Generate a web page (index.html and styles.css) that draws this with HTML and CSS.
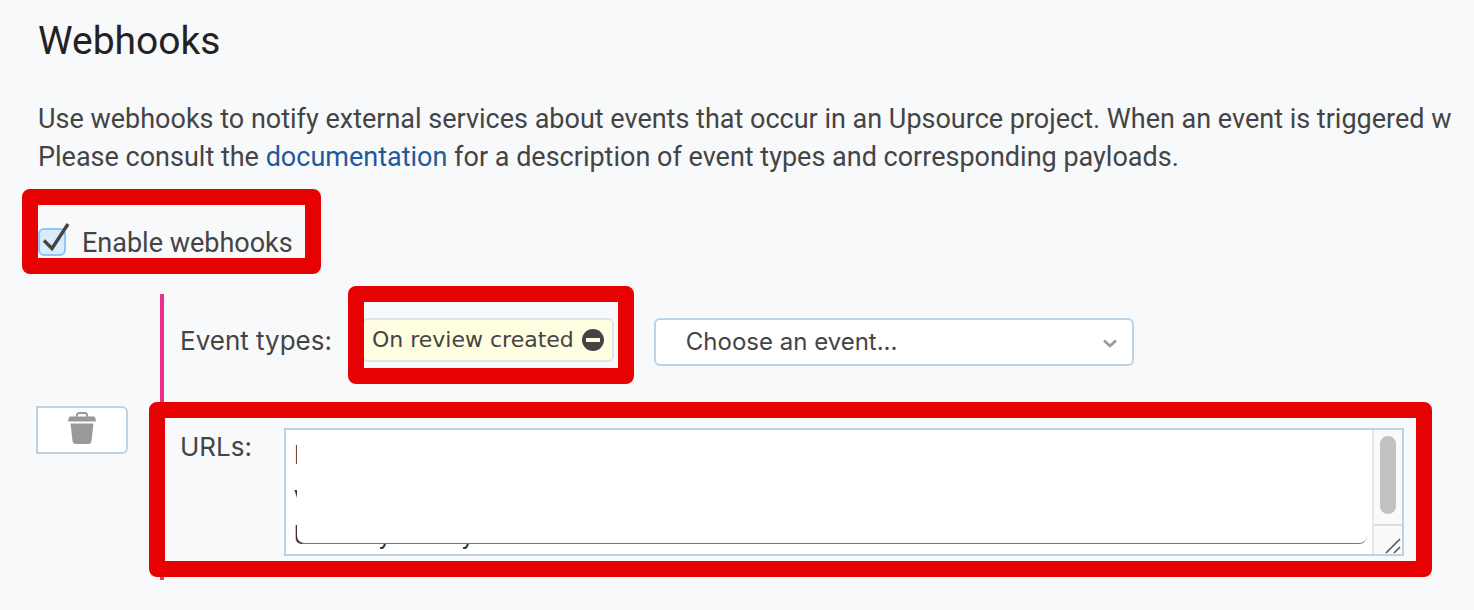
FILE: index.html
```html
<!DOCTYPE html>
<html lang="en">
<head>
<meta charset="utf-8">
<title>Webhooks</title>
<link rel="stylesheet" href="styles.css">
</head>
<body>
<main class="page">
  <h1 class="title">Webhooks</h1>
  <p class="intro">Use webhooks to notify external services about events that occur in an Upsource project. When an event is triggered w<br>Please consult the <a class="link" href="#documentation">documentation</a> for a description of event types and corresponding payloads.</p>

  <div class="enable marked">
    <label class="enable-label" for="enable">
      <span class="check">
        <input class="check-input" type="checkbox" id="enable" checked>
        <svg class="check-mark" viewBox="0 0 32 32" width="32" height="32" aria-hidden="true"><path d="M6 18.500L14 26.500L30 2" fill="none" stroke="#444" stroke-width="3.400"/></svg>
      </span>
      Enable webhooks
    </label>
    <span class="mark mark-enable"></span>
  </div>

  <div class="hook">
    <button class="trash" type="button" aria-label="Delete webhook">
      <svg viewBox="0 0 28 32" width="28" height="32" aria-hidden="true"><path d="M2 4.500H7.500L8.500 1.500Q9 0 10.500 0H17.500Q19 0 19.500 1.500L20.500 4.500H26Q27.500 5 28 9.500H0Q.5 5 2 4.500ZM9.500 4.500H18.500L17.500 2H10.500ZM2.500 11.500H25.500L23.500 29Q23 32 20.500 32H7.500Q5 32 4.500 29Z" fill="#999" fill-rule="evenodd"/></svg>
    </button>
    <div class="settings">
      <div class="row events">
        <label class="row-label" for="event">Event types:</label>
        <div class="chip marked">
          <span>On review created</span>
          <button class="chip-remove" type="button" aria-label="Remove event">
            <svg viewBox="0 0 22 22" width="22" height="22" aria-hidden="true"><circle cx="11" cy="11" r="11" fill="#444"/><rect x="4" y="9" width="14" height="4" fill="#fffee0"/></svg>
          </button>
          <span class="mark mark-chip"></span>
        </div>
        <div class="picker">
          <select class="select" id="event"><option>Choose an event...</option></select>
          <svg class="arrow" viewBox="0 0 14 9" width="14" height="9" aria-hidden="true"><path d="M1 1.500L7 7L13 1.500" fill="none" stroke="#999" stroke-width="2.600"/></svg>
        </div>
      </div>
      <div class="row urls">
        <label class="row-label" for="urls">URLs:</label>
        <div class="url-box">
          <textarea class="url-input" id="urls" rows="3">N
v
UoZMNyoZo14yZ</textarea>
          <span class="cover"></span>
          <span class="scroll"><span class="thumb"></span>
            <svg class="grip" viewBox="0 0 28 28" width="28" height="28" aria-hidden="true"><path d="M12 27L26 13M20 27L26 21" fill="none" stroke="#555" stroke-width="1.600"/></svg>
          </span>
        </div>
      </div>
      <span class="mark mark-urls"></span>
    </div>
  </div>
</main>
</body>
</html>
```
FILE: styles.css
```css
* { box-sizing: border-box; }

body {
  margin: 0;
  background: #f8f9fb;
  color: #444;
  font: 27px/38px Roboto, "Liberation Sans", sans-serif;
}

.page { padding: 16px 0 28px 36px; overflow: hidden; }

.title {
  margin: 0 2px 34px;
  color: #222;
  font-size: 39px;
  font-weight: 400;
  line-height: 50px;
}

.intro { margin: 0 0 48px 2px; white-space: nowrap; }
.link { color: #1f5999; text-decoration: none; }

.marked { position: relative; }

.mark {
  position: absolute;
  border: 16px solid #e60202;
  border-radius: 8px;
  pointer-events: none;
}

.enable { width: fit-content; margin: 0 0 32px 2px; }
.enable-label { display: flex; align-items: center; gap: 16px; }
.mark-enable { inset: -35px -28px -12px -16px; }

.check { position: relative; display: flex; padding-bottom: 2px; }
.check-input {
  appearance: none;
  width: 28px;
  height: 28px;
  margin: 0;
  border: 2px solid #91c5f9;
  border-radius: 6px;
  background: #d9ebfd;
}
.check-mark { position: absolute; left: 0; bottom: 4px; }

.hook { display: flex; align-items: flex-start; gap: 32px; }

.trash {
  flex: none;
  display: flex;
  justify-content: center;
  width: 92px;
  height: 48px;
  margin: 112px 0 0;
  padding: 4px 0;
  border: 2px solid #bcd2e5;
  border-radius: 0 6px 6px 0;
  background: #fff;
}

.settings {
  position: relative;
  flex: 1;
  padding: 24px 70px 24px 16px;
  border-left: 4px solid #eb2f8b;
}
.mark-urls { inset: 108px 42px 3px -15px; }

.row { display: flex; align-items: flex-start; }
.events { margin-bottom: 62px; }
.row-label {
  flex: none;
  padding-top: 4px;
  font-family: Inter, "Liberation Sans", sans-serif;
  font-size: 26px;
}
.events .row-label { width: 182px; }
.urls .row-label { width: 104px; padding-top: 0; }

.chip {
  display: flex;
  align-items: center;
  gap: 8px;
  height: 44px;
  margin-right: 40px;
  padding: 0 8px;
  border: 2px solid #dfe5eb;
  border-radius: 6px;
  background: #fffee0;
  font: 22px/40px "DejaVu Sans", sans-serif;
  white-space: nowrap;
}
.chip-remove { display: flex; padding: 0; border: 0; background: none; }
.mark-chip { inset: -34px -22px -24px -16px; }

.picker { position: relative; flex: 0 1 480px; }
.select {
  appearance: none;
  display: block;
  width: 100%;
  height: 48px;
  padding: 0 30px;
  border: 2px solid #bcd2e5;
  border-radius: 6px;
  background: #fff;
  color: #444;
  font: 24px/38px Inter, "Liberation Sans", sans-serif;
}
.arrow { position: absolute; right: 17px; top: 21px; }

.url-box { position: relative; flex: 1; height: 128px; }
.url-input {
  display: block;
  width: 100%;
  height: 100%;
  padding: 6px 8px;
  border: 2px solid #bcd2e5;
  background: #fff;
  color: #333;
  font: inherit;
  font-size: 25px;
  line-height: 40px;
  resize: none;
  overflow: hidden;
}
.cover {
  position: absolute;
  inset: 6px 37px 12px 13px;
  border-bottom: 1px solid #777;
  border-radius: 0 0 8px 8px;
  background: #fff;
}
.scroll {
  position: absolute;
  inset: 2px 0 2px auto;
  display: flex;
  flex-direction: column;
  align-items: center;
  justify-content: space-between;
  width: 32px;
  padding-top: 6px;
  border-left: 2px solid #e8e8e8;
  border-right: 2px solid #bcd2e5;
  background: #fafafa;
}
.thumb { width: 16px; height: 78px; border-radius: 8px; background: #c1c1c1; }
.grip { border-top: 2px solid #ddd; height: 30px; }
```
